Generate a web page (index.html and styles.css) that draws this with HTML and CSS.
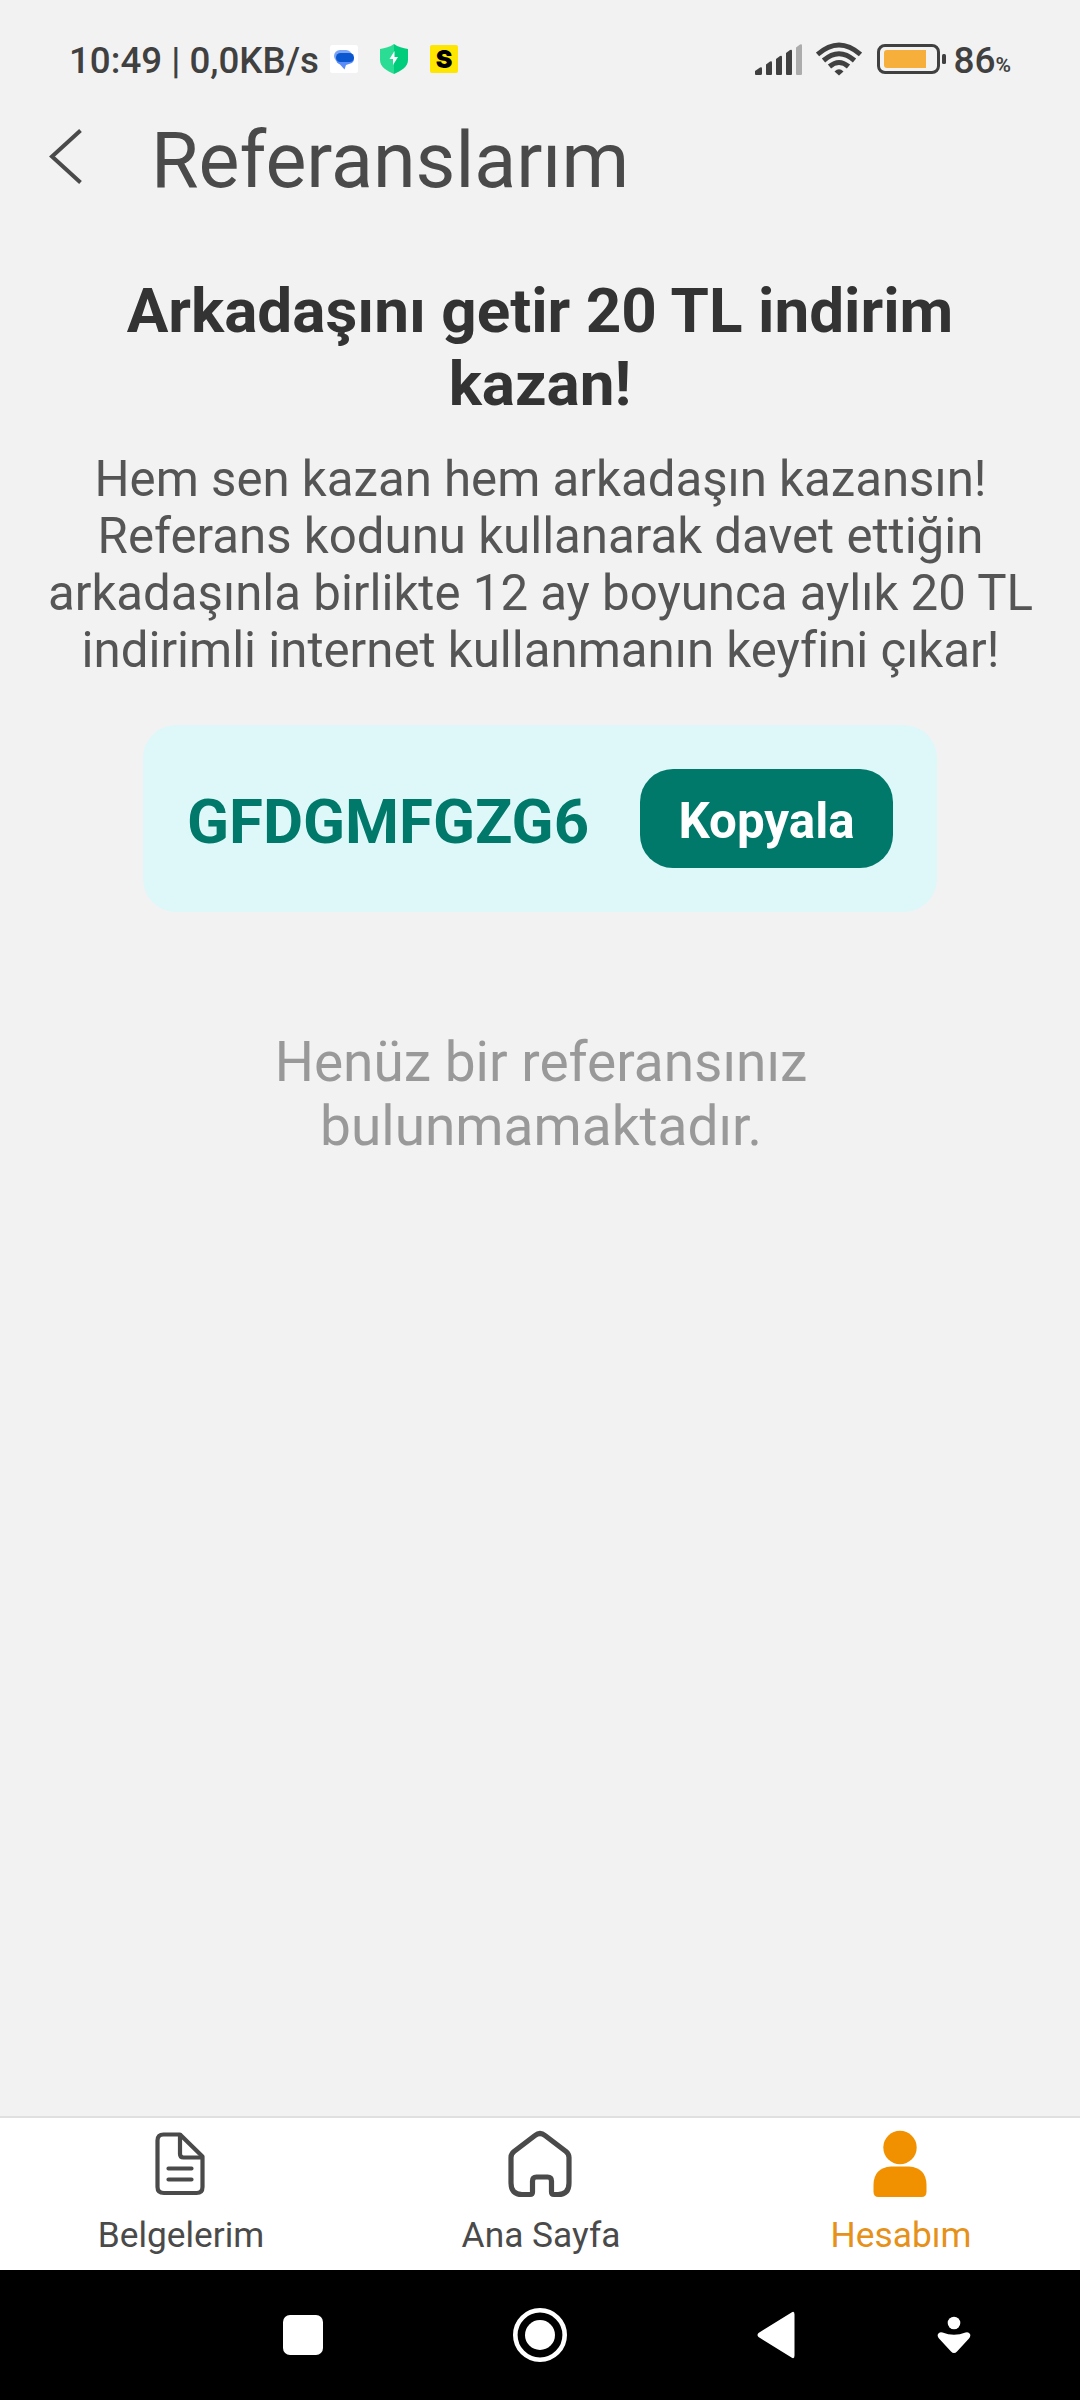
FILE: index.html
```html
<!DOCTYPE html>
<html lang="tr">
<head>
<meta charset="utf-8">
<title>Referanslarım</title>
<link rel="stylesheet" href="styles.css">
</head>
<body>
<div class="screen">
  <div class="status">
    <span class="clock">10:49 | 0,0KB/s</span>
    <div class="notifs">
      <svg width="28" height="28" viewBox="0 0 28 28"><rect width="28" height="28" rx="2.500" fill="#fff"/><rect x="4" y="5" width="18" height="12" rx="6" fill="#7ba4f7"/><path d="M6 12H24v2q0 4-5 5l-3 1-1.500 4.500L10 19.500Q6 18 6 14z" fill="#5a8df8"/><rect x="6" y="8" width="18" height="9" rx="4.500" fill="#0b57d0"/></svg>
      <svg width="28" height="30" viewBox="0 0 28 30"><path d="M14 0C10 3 5 4 0 5v11c0 7 7 11 14 14z" fill="#2bdd94"/><path d="M14 0c4 3 9 4 14 5v11c0 7-7 11-14 14z" fill="#00cd7c"/><path d="M14.500 7 9.500 15h3.500l0 6 5-8h-3.500z" fill="#fff"/></svg>
      <span class="s-badge">S</span>
    </div>
    <div class="system">
      <svg class="signal" width="48" height="31" viewBox="0 0 48 31" fill="#404040"><path d="M0 27 5 23.500q2-1 2 1V29.500q0 1.500-1.500 1.500H1q-1 0-1-1z"/><path d="M11 20.500l4-3q2-1 2 1V30q0 1-1 1h-4q-1 0-1-1z"/><path d="M21 15l4-3q2-1 2 1V30q0 1-1 1h-4q-1 0-1-1z"/><path d="M31 9l4-3q2-1 2 1V30q0 1-1 1h-4q-1 0-1-1z"/><path d="M41 3.500l4-3q2-1 2 1V30q0 1-1 1h-4q-1 0-1-1z" fill="#acacac"/></svg>
      <svg class="wifi" width="46" height="34" viewBox="0 0 46 34" fill="none" stroke="#404040" stroke-width="5"><path d="M1.500 12.500Q23-6.500 44.500 12.500"/><path d="M7.500 18.500Q23 5 38.500 18.500"/><path d="M13.500 24.500Q23 16.500 32.500 24.500"/><path d="M23 33.500 18.500 29.500Q23 25 27.500 29.500z" fill="#404040" stroke="none"/></svg>
      <svg class="battery" width="70" height="30" viewBox="0 0 70 30"><rect x="1.500" y="1.500" width="60" height="27" rx="6.500" fill="none" stroke="#404040" stroke-width="3"/><path d="M10 6H49V24H10Q7 24 7 21V9Q7 6 10 6z" fill="#f6af3a"/><rect x="65" y="10" width="4" height="10" rx="1.500" fill="#404040"/></svg>
      <span class="level">86</span><span class="percent">%</span>
    </div>
  </div>
  <header class="header">
    <svg width="34" height="56" viewBox="0 0 34 56" fill="none" stroke="#4a4a4a" stroke-width="4"><path d="M31.500 1.500 3 27.500l28.500 26"/></svg>
    <h1 class="title">Referanslarım</h1>
  </header>
  <main class="content">
    <h2 class="headline">Arkadaşını getir 20 TL indirim<br>kazan!</h2>
    <p class="lead">Hem sen kazan hem arkadaşın kazansın!<br>Referans kodunu kullanarak davet ettiğin<br>arkadaşınla birlikte 12 ay boyunca aylık 20 TL<br>indirimli internet kullanmanın keyfini çıkar!</p>
    <div class="code-card">
      <span class="code">GFDGMFGZG6</span>
      <button class="copy" type="button">Kopyala</button>
    </div>
    <p class="empty">Henüz bir referansınız<br>bulunmamaktadır.</p>
  </main>
  <nav class="tabs">
    <a class="tab"><svg width="70" height="70" viewBox="0 0 70 70" fill="none" stroke="#4a4a4a" stroke-width="4.200" stroke-linecap="round" stroke-linejoin="round"><path d="M18.500 4.500H35L57.500 26.500V57Q57.500 63 51.500 63H19Q12.500 63 12.500 57V10.500Q12.500 4.500 18.500 4.500z"/><path d="M35 5V24q0 3.500 3.500 3.500H57M23.500 38.500H46.500M23.500 49.500H46.500"/></svg><span>Belgelerim</span></a>
    <a class="tab"><svg width="70" height="70" viewBox="0 0 70 70" fill="none" stroke="#4a4a4a" stroke-width="5.200" stroke-linejoin="round"><path d="M30 5.500q5-4 10 0L61 21.500q3 2.500 3 6V53Q64 64.500 53 64.500H49Q46.500 64.500 46.500 62V51Q46.500 47 42.500 47H31.500Q27.500 47 27.500 51V62Q27.500 64.500 25 64.500H17Q6 64.500 6 53V27.500q0-3.500 3-6z"/></svg><span>Ana Sayfa</span></a>
    <a class="tab active"><svg width="70" height="70" viewBox="0 0 70 70" fill="#f29100"><circle cx="35" cy="17.500" r="16.700"/><path d="M26 36.500H44Q61.500 38 61.500 55V61.500Q61.500 67 56.500 67H13.500Q8.500 67 8.500 61.500V55Q8.500 38 26 36.500z"/></svg><span>Hesabım</span></a>
  </nav>
  <div class="sysnav">
    <svg width="40" height="40" viewBox="0 0 40 40" fill="#fff"><rect width="40" height="40" rx="7"/></svg>
    <svg class="nav-home" width="54" height="54" viewBox="0 0 54 54" fill="#fff"><circle cx="27" cy="27" r="24.700" fill="none" stroke="#fff" stroke-width="4.600"/><circle cx="27" cy="27" r="15"/></svg>
    <svg class="nav-back" width="38" height="48" viewBox="0 0 38 48" fill="#fff"><path d="M34.500 1.500Q37.500-.500 37.500 3.500V44.500Q37.500 48.500 34.500 46.500L1.500 26q-2-2 0-4z"/></svg>
    <svg class="nav-hide" width="34" height="38" viewBox="0 0 34 38" fill="#fff"><circle cx="17" cy="7" r="6.300"/><path d="M5.500 16.500Q17 21 28.500 16.500q3-1 4.500 1.500 1 2.500-1 4.500L20 35.500q-3 3-6 0L2 22.500q-2-2-1-4.500 1.500-2.500 4.500-1.500z"/></svg>
  </div>
</div>
</body>
</html>
```
FILE: styles.css
```css
* { box-sizing: border-box; }
body { margin: 0; font-family: Roboto, sans-serif; background: #f2f2f2; color: #4a4a4a; }
h1, h2, p { margin: 0; }
svg { display: block; flex: none; }
.screen { width: 1080px; height: 2400px; display: flex; flex-direction: column; white-space: nowrap; }

.status { height: 118px; padding: 0 69px; display: flex; align-items: center; color: #404040; }
.clock { width: 261px; font-size: 36.700px; font-weight: 500; line-height: 42px; padding-top: 3px; }
.notifs { display: flex; align-items: center; gap: 22px; }
.s-badge { width: 28px; height: 28px; border-radius: 2px; background: #ffe600; color: #000; font: 900 25px/28px Inter, sans-serif; text-align: center; }
.system { margin-left: auto; display: flex; align-items: center; }
.signal { margin-right: 13px; }
.wifi { margin-right: 15px; }
.level { margin-left: 6px; font-size: 37px; font-weight: 500; line-height: 42px; padding-top: 3px; }
.percent { font-size: 21px; font-weight: 600; line-height: 24px; padding-top: 12px; }

.header { height: 82px; padding-left: 49px; display: flex; align-items: flex-start; }
.header svg { margin-top: 11px; }
.title { margin-left: 68px; margin-top: -2px; font-size: 77.200px; line-height: 90px; font-weight: 400; }

.content { flex: 1; padding-top: 74px; display: flex; flex-direction: column; align-items: center; text-align: center; }
.headline { font-size: 62px; line-height: 73px; font-weight: 700; color: #333; }
.lead { margin-top: 31px; padding-left: 1px; font-size: 49.200px; line-height: 57px; color: #555; }
.code-card { margin-top: 46px; width: 794px; height: 187px; padding: 0 44px; border-radius: 33px; background: #def7f9; display: flex; align-items: center; justify-content: space-between; }
.code { font-size: 61.700px; line-height: 72px; font-weight: 700; color: #00796b; padding-top: 6px; }
.copy { width: 253px; height: 99px; padding: 5px 0 0; border: 0; border-radius: 33px; background: #00796b; color: #fff; font: 700 49.300px/58px Roboto, sans-serif; }
.empty { margin-top: 118px; padding-left: 2px; font-size: 55px; line-height: 64px; color: #999; }

.tabs { height: 154px; border-top: 2px solid #e0e0e0; background: #fff; display: grid; grid-template-columns: repeat(3, 1fr); }
.tab { padding-top: 12px; display: flex; flex-direction: column; align-items: center; gap: 14px; font-size: 35.300px; line-height: 42px; }
.tab span { padding-left: 2px; }
.active { color: #e6911a; }

.sysnav { height: 130px; padding-left: 283px; background: #000; display: flex; align-items: center; }
.nav-home, .nav-back { margin-left: 190px; }
.nav-hide { margin-left: 142px; }
```
